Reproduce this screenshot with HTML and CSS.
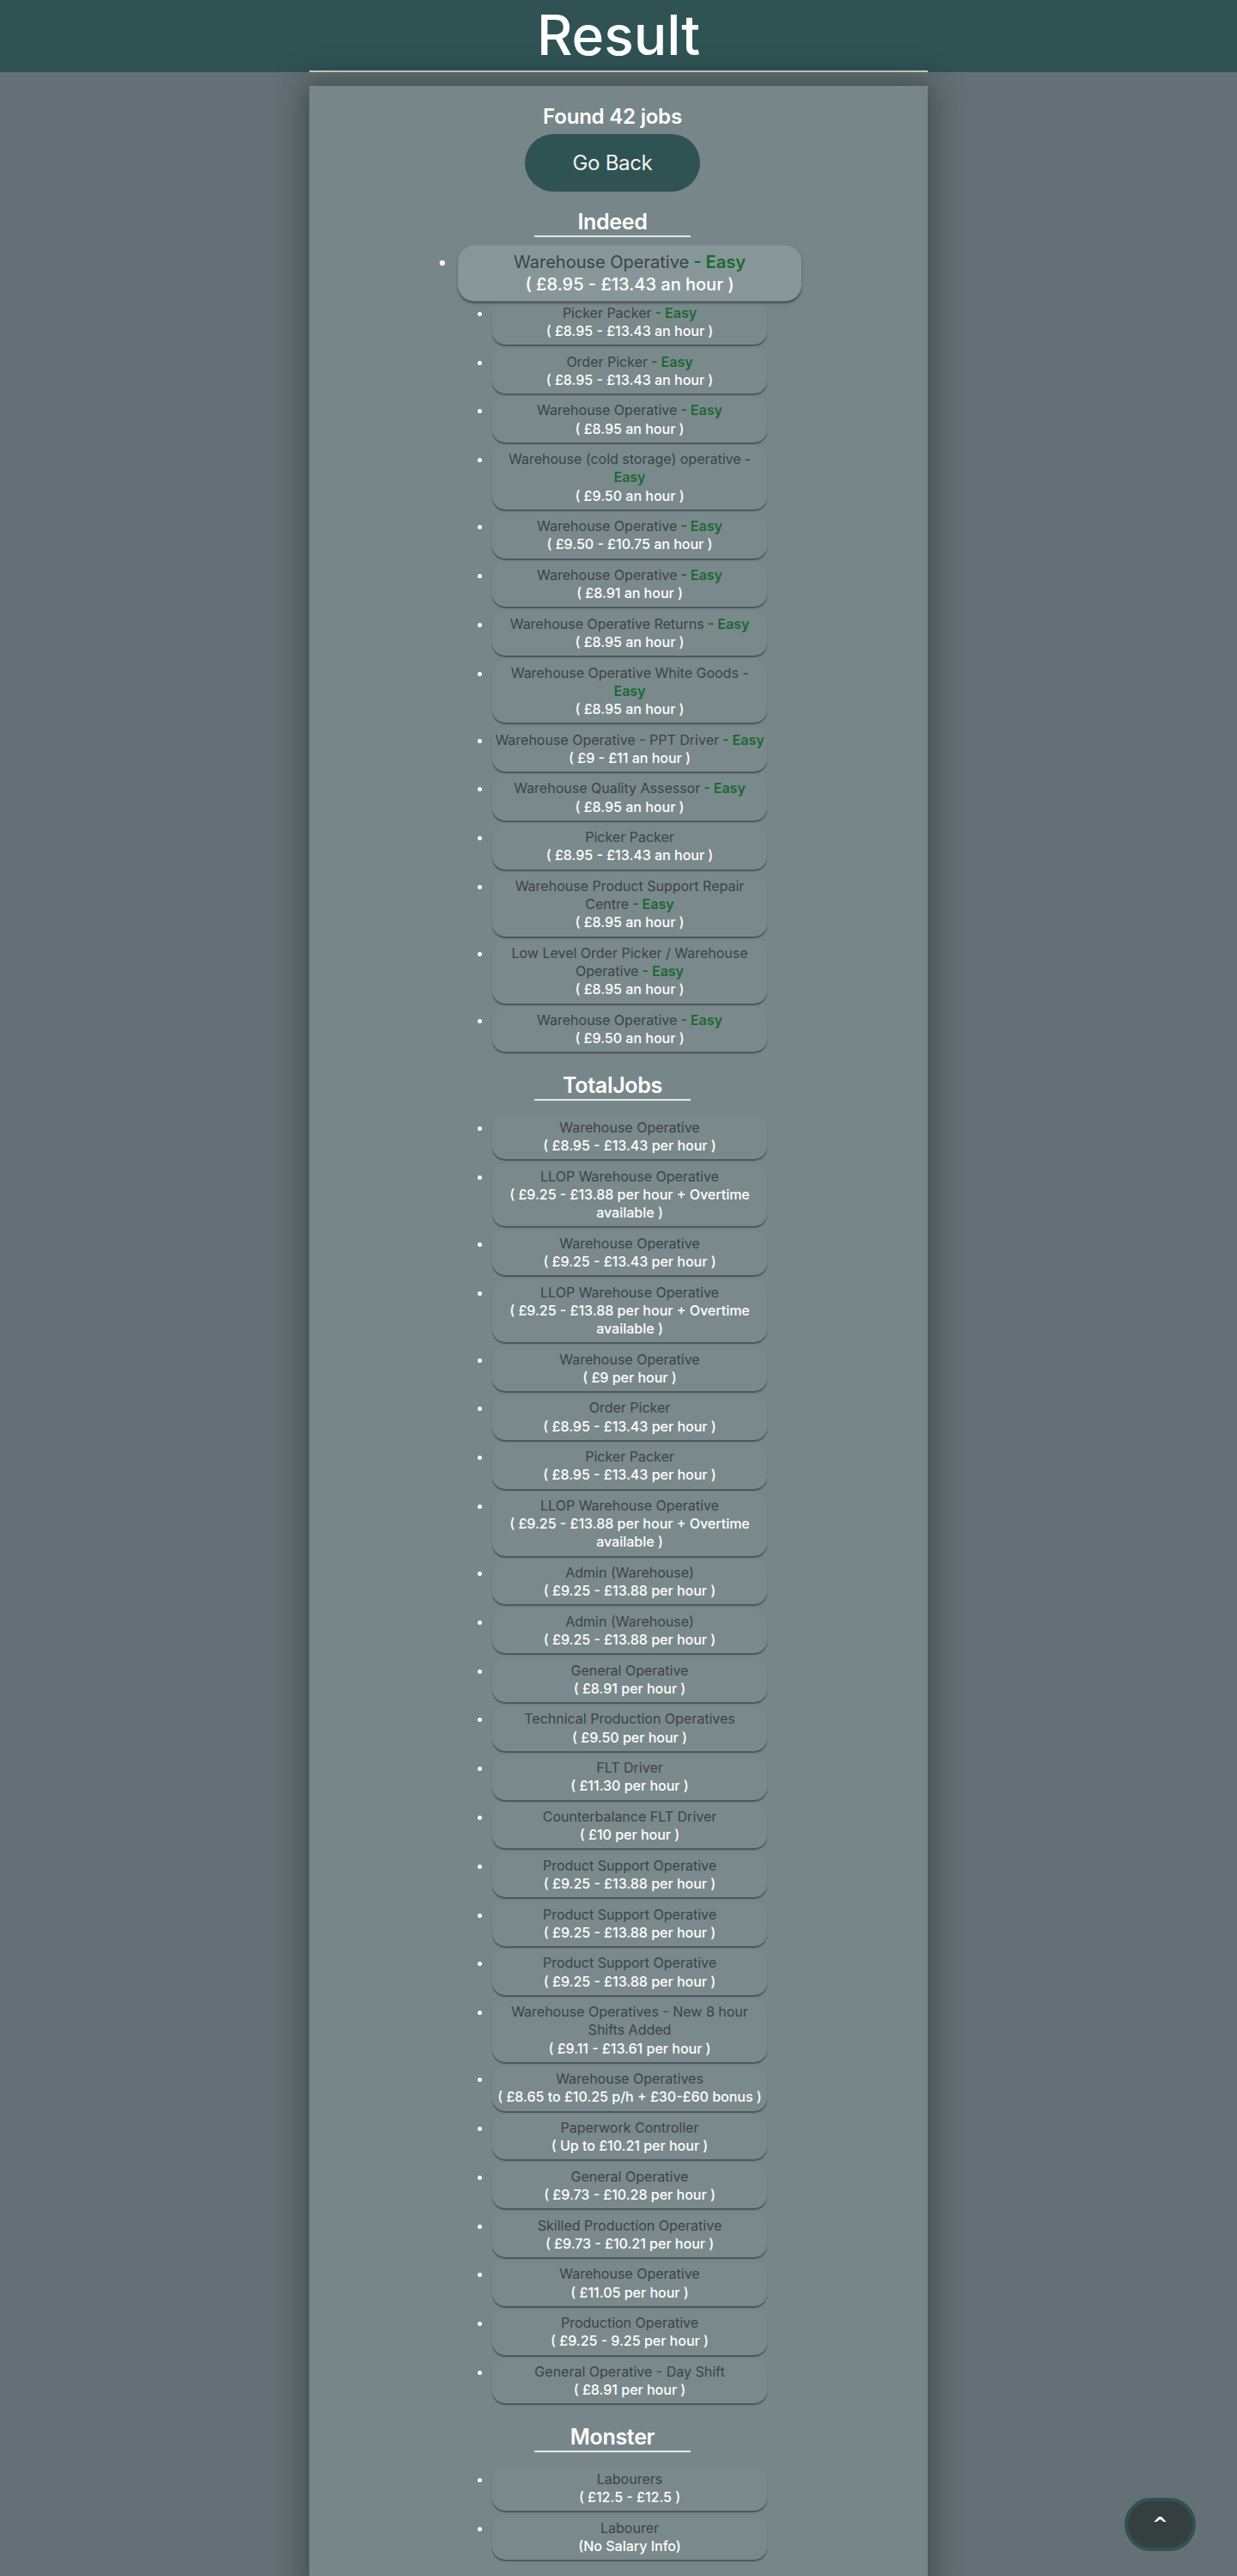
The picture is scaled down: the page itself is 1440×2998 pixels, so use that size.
FILE: index.html
```html
<!DOCTYPE html>
<html lang="en">
<head>
<meta charset="utf-8">
<title>Result</title>
<link rel="stylesheet" href="styles.css">
</head>
<body>
<header class="top">
  <h1 class="title">Result</h1>
  <hr class="rule">
</header>
<main class="panel">
  <h3 class="count">Found 42 jobs</h3>
  <button class="back" type="button">Go Back</button>

  <section class="site">
    <h2 class="site-name">Indeed</h2>
    <ul class="jobs">
      <li class="job job--active"><span class="job-title">Warehouse Operative</span><span class="easy"> - Easy</span><span class="pay">( £8.95 - £13.43 an hour )</span></li>
      <li class="job"><span class="job-title">Picker Packer</span><span class="easy"> - Easy</span><span class="pay">( £8.95 - £13.43 an hour )</span></li>
      <li class="job"><span class="job-title">Order Picker</span><span class="easy"> - Easy</span><span class="pay">( £8.95 - £13.43 an hour )</span></li>
      <li class="job"><span class="job-title">Warehouse Operative</span><span class="easy"> - Easy</span><span class="pay">( £8.95 an hour )</span></li>
      <li class="job"><span class="job-title">Warehouse (cold storage) operative</span><span class="easy"> - Easy</span><span class="pay">( £9.50 an hour )</span></li>
      <li class="job"><span class="job-title">Warehouse Operative</span><span class="easy"> - Easy</span><span class="pay">( £9.50 - £10.75 an hour )</span></li>
      <li class="job"><span class="job-title">Warehouse Operative</span><span class="easy"> - Easy</span><span class="pay">( £8.91 an hour )</span></li>
      <li class="job"><span class="job-title">Warehouse Operative Returns</span><span class="easy"> - Easy</span><span class="pay">( £8.95 an hour )</span></li>
      <li class="job"><span class="job-title">Warehouse Operative White Goods</span><span class="easy"> -<br>Easy</span><span class="pay">( £8.95 an hour )</span></li>
      <li class="job"><span class="job-title">Warehouse Operative - PPT Driver</span><span class="easy"> - Easy</span><span class="pay">( £9 - £11 an hour )</span></li>
      <li class="job"><span class="job-title">Warehouse Quality Assessor</span><span class="easy"> - Easy</span><span class="pay">( £8.95 an hour )</span></li>
      <li class="job"><span class="job-title">Picker Packer</span><span class="pay">( £8.95 - £13.43 an hour )</span></li>
      <li class="job"><span class="job-title">Warehouse Product Support Repair Centre</span><span class="easy"> - Easy</span><span class="pay">( £8.95 an hour )</span></li>
      <li class="job"><span class="job-title">Low Level Order Picker / Warehouse Operative</span><span class="easy"> - Easy</span><span class="pay">( £8.95 an hour )</span></li>
      <li class="job"><span class="job-title">Warehouse Operative</span><span class="easy"> - Easy</span><span class="pay">( £9.50 an hour )</span></li>
    </ul>
  </section>

  <section class="site">
    <h2 class="site-name">TotalJobs</h2>
    <ul class="jobs">
      <li class="job"><span class="job-title">Warehouse Operative</span><span class="pay">( £8.95 - £13.43 per hour )</span></li>
      <li class="job"><span class="job-title">LLOP Warehouse Operative</span><span class="pay">( £9.25 - £13.88 per hour + Overtime available )</span></li>
      <li class="job"><span class="job-title">Warehouse Operative</span><span class="pay">( £9.25 - £13.43 per hour )</span></li>
      <li class="job"><span class="job-title">LLOP Warehouse Operative</span><span class="pay">( £9.25 - £13.88 per hour + Overtime available )</span></li>
      <li class="job"><span class="job-title">Warehouse Operative</span><span class="pay">( £9 per hour )</span></li>
      <li class="job"><span class="job-title">Order Picker</span><span class="pay">( £8.95 - £13.43 per hour )</span></li>
      <li class="job"><span class="job-title">Picker Packer</span><span class="pay">( £8.95 - £13.43 per hour )</span></li>
      <li class="job"><span class="job-title">LLOP Warehouse Operative</span><span class="pay">( £9.25 - £13.88 per hour + Overtime available )</span></li>
      <li class="job"><span class="job-title">Admin (Warehouse)</span><span class="pay">( £9.25 - £13.88 per hour )</span></li>
      <li class="job"><span class="job-title">Admin (Warehouse)</span><span class="pay">( £9.25 - £13.88 per hour )</span></li>
      <li class="job"><span class="job-title">General Operative</span><span class="pay">( £8.91 per hour )</span></li>
      <li class="job"><span class="job-title">Technical Production Operatives</span><span class="pay">( £9.50 per hour )</span></li>
      <li class="job"><span class="job-title">FLT Driver</span><span class="pay">( £11.30 per hour )</span></li>
      <li class="job"><span class="job-title">Counterbalance FLT Driver</span><span class="pay">( £10 per hour )</span></li>
      <li class="job"><span class="job-title">Product Support Operative</span><span class="pay">( £9.25 - £13.88 per hour )</span></li>
      <li class="job"><span class="job-title">Product Support Operative</span><span class="pay">( £9.25 - £13.88 per hour )</span></li>
      <li class="job"><span class="job-title">Product Support Operative</span><span class="pay">( £9.25 - £13.88 per hour )</span></li>
      <li class="job"><span class="job-title">Warehouse Operatives - New 8 hour Shifts Added</span><span class="pay">( £9.11 - £13.61 per hour )</span></li>
      <li class="job"><span class="job-title">Warehouse Operatives</span><span class="pay">( £8.65 to £10.25 p/h + £30-£60 bonus )</span></li>
      <li class="job"><span class="job-title">Paperwork Controller</span><span class="pay">( Up to £10.21 per hour )</span></li>
      <li class="job"><span class="job-title">General Operative</span><span class="pay">( £9.73 - £10.28 per hour )</span></li>
      <li class="job"><span class="job-title">Skilled Production Operative</span><span class="pay">( £9.73 - £10.21 per hour )</span></li>
      <li class="job"><span class="job-title">Warehouse Operative</span><span class="pay">( £11.05 per hour )</span></li>
      <li class="job"><span class="job-title">Production Operative</span><span class="pay">( £9.25 - 9.25 per hour )</span></li>
      <li class="job"><span class="job-title">General Operative - Day Shift</span><span class="pay">( £8.91 per hour )</span></li>
    </ul>
  </section>

  <section class="site">
    <h2 class="site-name">Monster</h2>
    <ul class="jobs">
      <li class="job"><span class="job-title">Labourers</span><span class="pay">( £12.5 - £12.5 )</span></li>
      <li class="job"><span class="job-title">Labourer</span><span class="pay">(No Salary Info)</span></li>
    </ul>
  </section>
</main>
<button class="to-top" type="button">^</button>
</body>
</html>
```

FILE: styles.css
```css
html, body {
  margin: 0;
  padding: 0;
}

body {
  background: #647075;
  font-family: "Inter", "Noto Sans", "DejaVu Sans", sans-serif;
  color: #ffffff;
}

.top {
  background: #2f5353;
  text-align: center;
}

.title {
  margin: 0;
  font-size: 64px;
  line-height: 82px;
  font-weight: 500;
  color: #ffffff;
  letter-spacing: 0;
}

.rule {
  display: block;
  width: 720px;
  height: 2px;
  margin: 0 auto;
  border: 0;
  background: #d4d6d6;
}

.panel {
  display: block;
  width: 720px;
  box-sizing: border-box;
  margin: 16px auto 0;
  padding: 21px 14px 24px 0;
  background: #778689;
  box-shadow: 0 0 34px 6px rgba(20, 30, 32, 0.45);
  text-align: center;
}

.count {
  margin: 0;
  font-size: 24px;
  line-height: 30px;
  font-weight: 600;
  color: #ffffff;
  letter-spacing: -0.2px;
}

.back {
  display: block;
  margin: 5px auto 0;
  height: 67px;
  padding: 0 55px;
  border: 0;
  border-radius: 34px;
  background: #2f5353;
  color: #f2f2f2;
  font-family: inherit;
  font-size: 24px;
  font-weight: 400;
  letter-spacing: -0.3px;
}

.site {
  display: block;
}

.site:first-of-type {
  margin-top: 17px;
}

.site-name {
  width: 182px;
  margin: 0 auto;
  padding: 3px 0 1px;
  font-size: 25px;
  line-height: 30px;
  font-weight: 600;
  color: #ffffff;
  border-bottom: 2px solid #e4e6e6;
  letter-spacing: -0.3px;
}

.jobs {
  margin: 16px 0 20.6px;
  padding-left: 40px;
  list-style: disc outside;
  color: #ffffff;
}

.job {
  width: 320px;
  box-sizing: border-box;
  margin: 0 auto 4.4px;
  padding: 5px 2px;
  font-size: 16px;
  line-height: 21.2px;
  text-align: center;
  background: #7a898c;
  border-radius: 15px;
  box-shadow: 0 2px 1px rgba(40, 50, 52, 0.55);
}

.job--active {
  background: #879799;
  transform: scale(1.25);
  box-shadow: 0 2px 2px rgba(40, 50, 52, 0.6);
}

.job-title {
  color: #3a4446;
  font-weight: 400;
  letter-spacing: 0;
}

.easy {
  color: #1a6930;
  font-weight: 600;
}

.pay {
  display: block;
  color: #ffffff;
  font-weight: 500;
}

.to-top {
  position: fixed;
  right: 48px;
  bottom: 29px;
  width: 83px;
  height: 62px;
  padding: 0;
  border: 4px solid #2f5353;
  border-radius: 31px;
  background: #353f40;
  color: #ffffff;
  font-family: "DejaVu Sans", sans-serif;
  font-size: 22px;
  font-weight: 700;
  line-height: 1;
}
```
